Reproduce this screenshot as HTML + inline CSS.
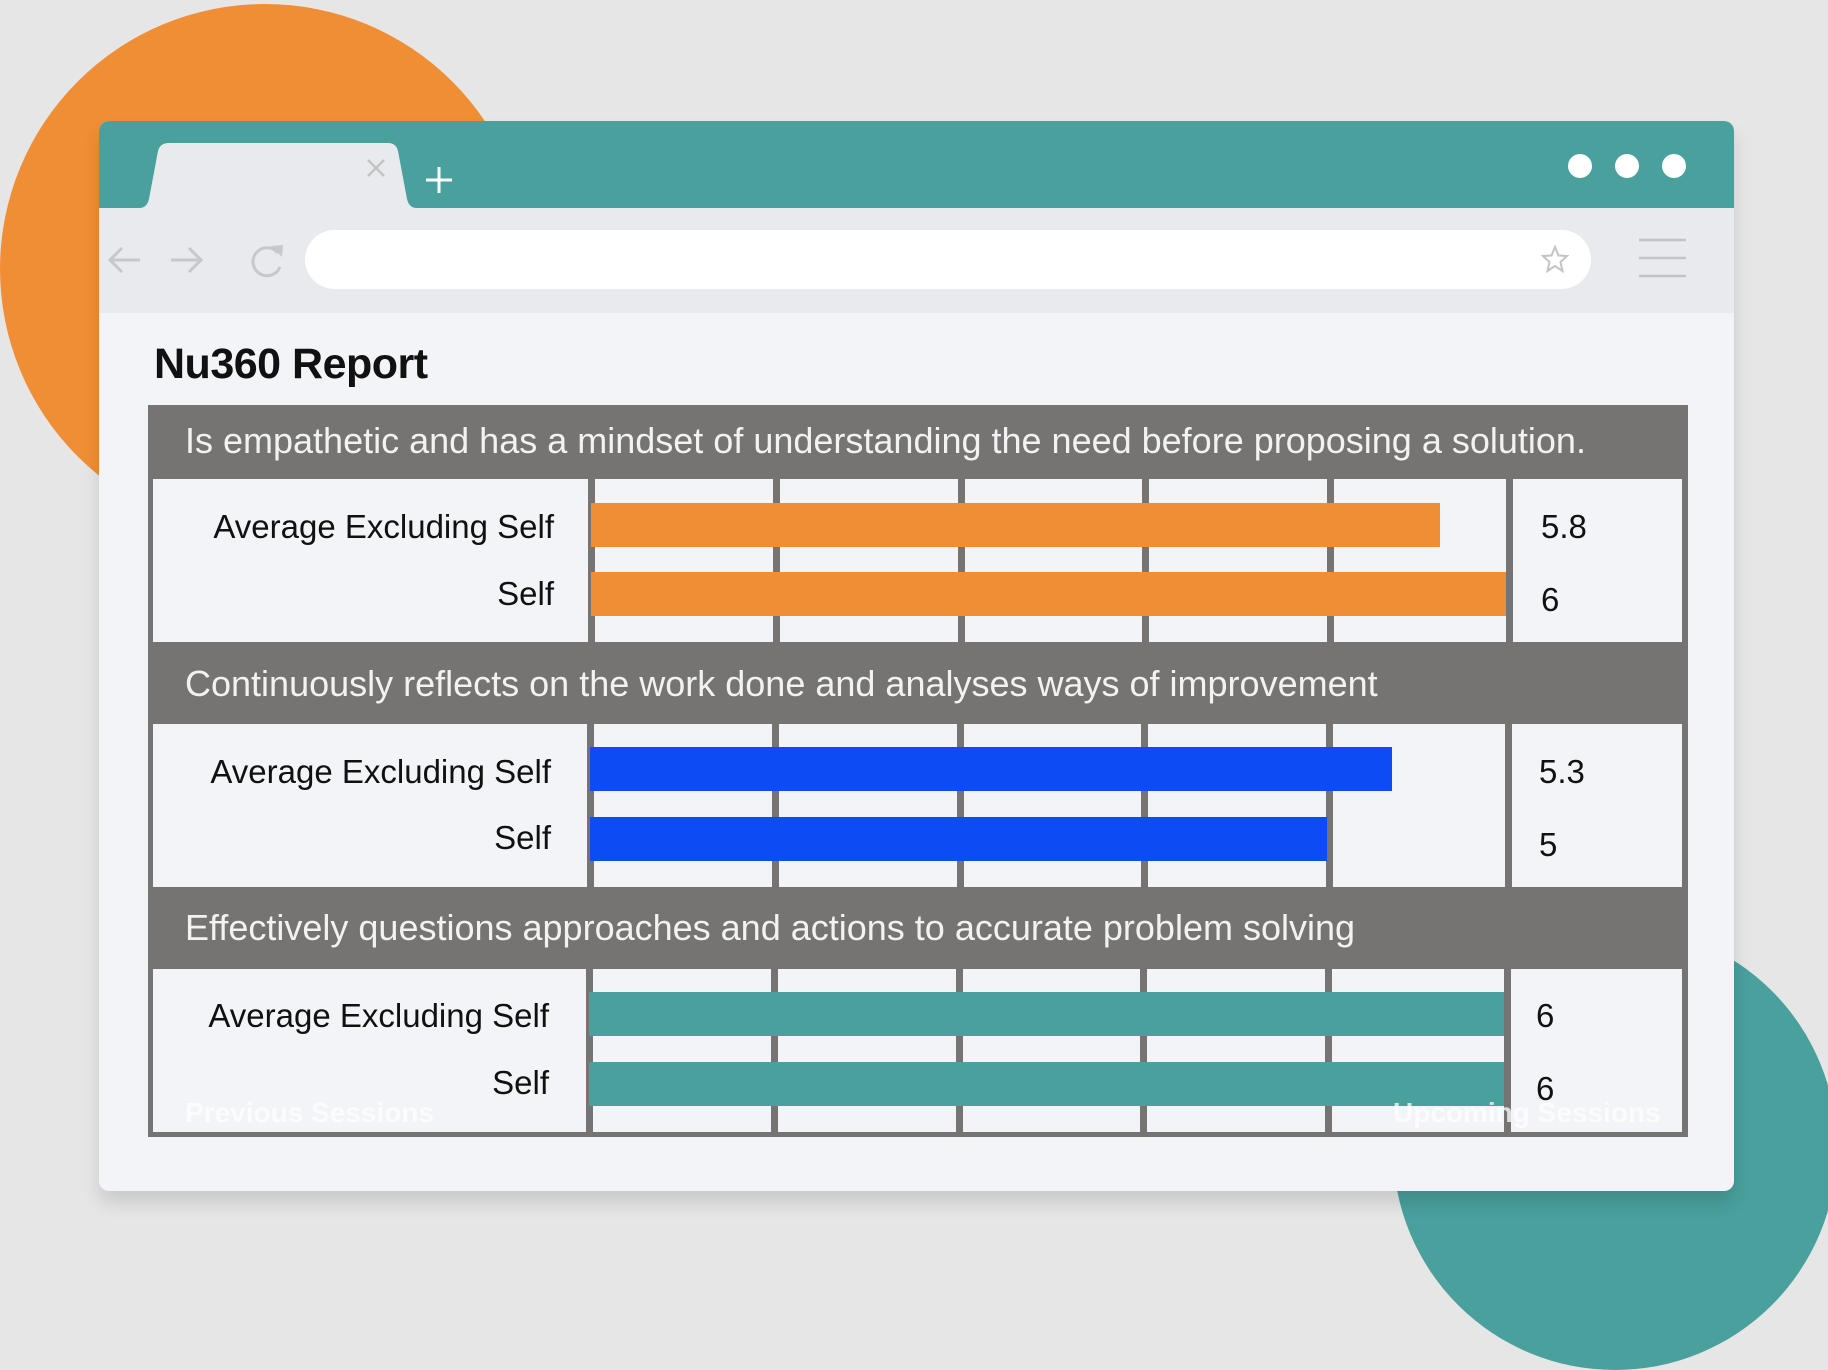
<!DOCTYPE html>
<html><head><meta charset="utf-8"><style>
*{margin:0;padding:0;box-sizing:border-box}
body{width:1828px;height:1360px;background:#e6e6e6;position:relative;overflow:hidden;font-family:"Liberation Sans",sans-serif}
.a{position:absolute}
.hdr{position:absolute;left:153px;width:1529px;color:#f2f2f2;font-size:36px;line-height:1;padding-left:32px;display:flex;align-items:center}
.cell{position:absolute;background:#f3f4f8}
.lab{position:absolute;right:1274px;font-size:33px;color:#111;text-align:right;white-space:nowrap;transform:translateY(-50%)}
.val{position:absolute;left:1541px;font-size:33px;color:#111;transform:translateY(-50%)}
.bar{position:absolute;height:44px}
</style></head><body>
<div class="a" style="left:0;top:4px;width:530px;height:530px;border-radius:50%;background:#f08e35"></div>
<div class="a" style="left:1393px;top:926px;width:444px;height:444px;border-radius:50%;background:#49a09d"></div>
<div class="a" style="left:99px;top:121px;width:1635px;height:1070px;border-radius:10px;background:#f3f4f8;box-shadow:0 12px 18px rgba(0,0,0,0.12);overflow:hidden">
 <div class="a" style="left:0;top:0;width:100%;height:87px;background:#49a09d"></div>
 <div class="a" style="left:0;top:87px;width:100%;height:105px;background:#e9eaee"></div>
 <svg class="a" style="left:0;top:0" width="1635" height="200">
  <path d="M40 87 Q48 87 50 78 L59 30 Q61 22 70 22 L289 22 Q297 22 299 30 L308 78 Q310 87 318 87 Z" fill="#e9eaee"/>
  <path d="M269 39 L285 55 M285 39 L269 55" stroke="#c4c4c6" stroke-width="2.5"/>
  <path d="M340 46 L340 72 M327 59 L353 59" stroke="#fff" stroke-width="3"/>
  <circle cx="1481" cy="45" r="12" fill="#fff"/><circle cx="1528" cy="45" r="12" fill="#fff"/><circle cx="1575" cy="45" r="12" fill="#fff"/>
  <path d="M11 139 H41 M23 127 L11 139 L23 151" stroke="#c8c8ca" stroke-width="3" fill="none"/>
  <path d="M72 139 H102 M90 127 L102 139 L90 151" stroke="#c8c8ca" stroke-width="3" fill="none"/>
  <path d="M179 132 A14 14 0 1 0 181 146" stroke="#c8c8ca" stroke-width="3" fill="none"/>
  <path d="M172 125 L184 124 L183 136 Z" fill="#c8c8ca"/>
  <rect x="206" y="109" width="1286" height="59" rx="29.5" fill="#fff"/>
  <path d="M1456 126 L1459.5 134.5 L1468 135 L1461.5 141 L1463.5 150 L1456 145 L1448.5 150 L1450.5 141 L1444 135 L1452.5 134.5 Z" fill="none" stroke="#c4c4c6" stroke-width="2"/>
  <path d="M1540 119 H1587 M1540 137 H1587 M1540 155 H1587" stroke="#c4c4c6" stroke-width="2.5"/>
 </svg>
</div>
<div class="a" style="left:154px;top:340px;font-size:43px;font-weight:bold;color:#111;letter-spacing:-0.5px">Nu360 Report</div>
<div class="a" style="left:148px;top:405px;width:1540px;height:732px;background:#757473"></div>
<div class="hdr" style="top:405px;height:71px">Is empathetic and has a mindset of understanding the need before proposing a solution.</div>
<div class="hdr" style="top:644px;height:79px">Continuously reflects on the work done and analyses ways of improvement</div>
<div class="hdr" style="top:888px;height:80px">Effectively questions approaches and actions to accurate problem solving</div>
<!-- row1 -->
<div class="cell" style="left:153px;top:479px;width:435px;height:163px"></div>
<div class="cell" style="left:595px;top:479px;width:178px;height:163px"></div>
<div class="cell" style="left:780px;top:479px;width:178px;height:163px"></div>
<div class="cell" style="left:965px;top:479px;width:177px;height:163px"></div>
<div class="cell" style="left:1149px;top:479px;width:178px;height:163px"></div>
<div class="cell" style="left:1334px;top:479px;width:172px;height:163px"></div>
<div class="cell" style="left:1513px;top:479px;width:169px;height:163px"></div>
<!-- row2 -->
<div class="cell" style="left:153px;top:724px;width:434px;height:163px"></div>
<div class="cell" style="left:594px;top:724px;width:178px;height:163px"></div>
<div class="cell" style="left:779px;top:724px;width:178px;height:163px"></div>
<div class="cell" style="left:964px;top:724px;width:177px;height:163px"></div>
<div class="cell" style="left:1148px;top:724px;width:178px;height:163px"></div>
<div class="cell" style="left:1333px;top:724px;width:172px;height:163px"></div>
<div class="cell" style="left:1512px;top:724px;width:170px;height:163px"></div>
<!-- row3 -->
<div class="cell" style="left:153px;top:969px;width:433px;height:163px"></div>
<div class="cell" style="left:593px;top:969px;width:178px;height:163px"></div>
<div class="cell" style="left:778px;top:969px;width:178px;height:163px"></div>
<div class="cell" style="left:963px;top:969px;width:177px;height:163px"></div>
<div class="cell" style="left:1147px;top:969px;width:178px;height:163px"></div>
<div class="cell" style="left:1332px;top:969px;width:172px;height:163px"></div>
<div class="cell" style="left:1511px;top:969px;width:171px;height:163px"></div>
<!-- bars -->
<div class="bar" style="left:591px;top:503px;width:849px;background:#f08e35"></div>
<div class="bar" style="left:591px;top:572px;width:915px;background:#f08e35"></div>
<div class="bar" style="left:590px;top:747px;width:802px;background:#0d4cf5"></div>
<div class="bar" style="left:590px;top:817px;width:737px;background:#0d4cf5"></div>
<div class="bar" style="left:589px;top:992px;width:915px;background:#49a09d"></div>
<div class="bar" style="left:589px;top:1062px;width:915px;background:#49a09d"></div>
<!-- labels -->
<div class="lab" style="top:527px">Average Excluding Self</div>
<div class="lab" style="top:594px">Self</div>
<div class="lab" style="top:772px;right:1277px">Average Excluding Self</div>
<div class="lab" style="top:838px;right:1277px">Self</div>
<div class="lab" style="top:1016px;right:1279px">Average Excluding Self</div>
<div class="lab" style="top:1083px;right:1279px">Self</div>
<div class="val" style="top:527px">5.8</div>
<div class="val" style="top:600px">6</div>
<div class="val" style="top:772px;left:1539px">5.3</div>
<div class="val" style="top:845px;left:1539px">5</div>
<div class="val" style="top:1016px;left:1536px">6</div>
<div class="val" style="top:1089px;left:1536px">6</div>
<div class="a" style="left:185px;top:1097px;font-size:28px;font-weight:bold;color:rgba(255,255,255,0.75)">Previous Sessions</div>
<div class="a" style="left:1393px;top:1097px;font-size:28px;font-weight:bold;color:rgba(255,255,255,0.75)">Upcoming Sessions</div>
</body></html>
